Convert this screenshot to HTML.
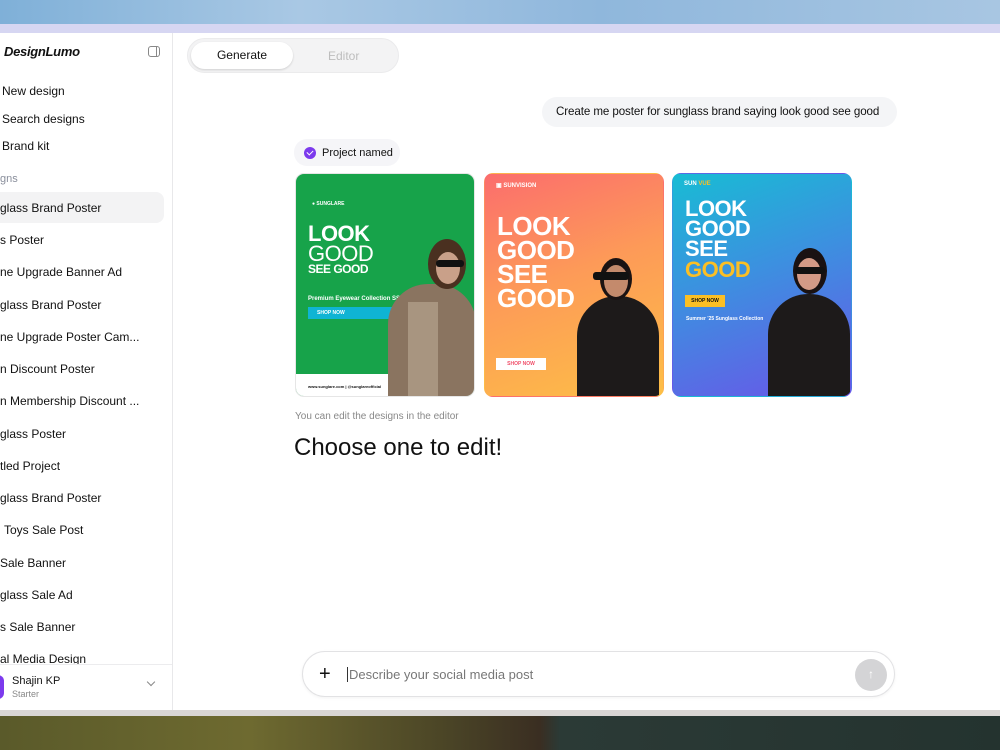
<!DOCTYPE html>
<html><head><meta charset="utf-8"><style>
*{box-sizing:border-box;margin:0;padding:0}
body{width:1000px;height:750px;overflow:hidden;position:relative;font-family:"Liberation Sans",sans-serif;color:#111;background:#fff}
.sky{position:absolute;left:0;top:0;width:1000px;height:26px;background:linear-gradient(90deg,#7fb0d8,#a9c8e4 30%,#8fb7dc 60%,#a8c6e2)}
.lav{position:absolute;left:0;top:24px;width:1000px;height:9px;background:#d6d6f2}
.land{position:absolute;left:0;top:716px;width:1000px;height:34px;background:linear-gradient(90deg,#5a5a2a,#6e6a30 25%,#4a4426 45%,#3a2e22 54%,#2b3a36 56%,#24332f 100%)}
.gray{position:absolute;left:0;top:709px;width:1000px;height:8px;background:#d9d6d4}
.win{position:absolute;left:0;top:33px;width:1000px;height:677px;background:#fff}
.side{position:absolute;left:0;top:0;width:173px;height:677px;border-right:1px solid #e8e8ea;overflow:hidden}
.logo{position:absolute;left:4px;top:11px;font-weight:bold;font-style:italic;font-size:13px;letter-spacing:-.3px}
.tog{position:absolute;left:148px;top:13px;width:12px;height:11px;border:1.3px solid #888;border-radius:3px}
.tog:after{content:"";position:absolute;right:2px;top:0;width:1.3px;height:9px;background:#888}
.it{position:absolute;left:2px;font-size:12px;white-space:nowrap}
.sec{position:absolute;left:0;top:140px;font-size:11px;color:#8a8f9c}
.sel{position:absolute;left:-10px;top:159px;width:174px;height:31px;background:#f3f3f4;border-radius:8px}
.user{position:absolute;left:0;top:631px;width:173px;height:46px;border-top:1px solid #ececee;background:#fff}
.main{position:absolute;left:174px;top:0;right:0;height:677px}
.seg{position:absolute;left:13px;top:5px;width:212px;height:35px;background:#f3f3f4;border-radius:18px;border:1px solid #ebebec}
.seg .a{position:absolute;left:3px;top:3px;width:102px;height:27px;background:#fff;border-radius:14px;box-shadow:0 1px 2px rgba(0,0,0,.15);font-size:12px;text-align:center;line-height:27px;font-weight:500}
.seg .b{position:absolute;left:140px;top:10px;font-size:12px;color:#bdbdbd}
.bub{position:absolute;left:368px;top:64px;height:30px;padding:0 18px 0 14px;background:#f4f5f7;border-radius:15px;font-size:11.6px;line-height:30px;letter-spacing:-.1px}
.chip{position:absolute;left:120px;top:106px;width:106px;height:27px;background:#f5f5f8;border-radius:13px;font-size:11px;line-height:28px;padding-left:28px}
.chip i{position:absolute;left:10px;top:8px;width:12px;height:12px;border-radius:50%;background:#7c3aed}
.chip i:after{content:"";position:absolute;left:3px;top:2.5px;width:5px;height:3px;border-left:1.5px solid #fff;border-bottom:1.5px solid #fff;transform:rotate(-45deg)}
.card{position:absolute;top:140px;width:180px;height:224px;border-radius:9px;overflow:hidden;border:1px solid #e6e6e6}
.h{position:absolute;color:#fff;font-weight:bold;line-height:.92;letter-spacing:-.5px}
.fig{position:absolute;background:#1d1a1a;border-radius:40px 40px 0 0}
.head{position:absolute;border-radius:50%}
.cap{position:absolute;left:121px;top:378px;font-size:10px;color:#888}
.choose{position:absolute;left:120px;top:401px;font-size:24px;color:#111}
.inp{position:absolute;left:128px;top:618px;width:593px;height:46px;border:1px solid #e2e2e4;border-radius:23px;background:#fff;box-shadow:0 1px 3px rgba(0,0,0,.05)}
.inp .p{position:absolute;left:16px;top:11px;font-size:20px;font-weight:300}
.inp .t{position:absolute;left:44px;top:15px;font-size:13px;color:#777;border-left:1px solid #333;padding-left:1px}
.inp .s{position:absolute;right:7px;top:7px;width:32px;height:32px;border-radius:50%;background:#d4d4d6;color:#fff;text-align:center;line-height:31px;font-size:12px}
</style></head><body>
<div class="sky"></div><div class="lav"></div><div class="gray"></div><div class="land"></div>
<div class="win">
 <div class="side">
  <div class="logo">DesignLumo</div><div class="tog"></div>
  <div class="it" style="top:51px">New design</div>
  <div class="it" style="top:79px">Search designs</div>
  <div class="it" style="top:106px">Brand kit</div>
  <div class="sec">gns</div>
  <div class="sel"></div>
  <div class="it" style="top:168px;left:0">glass Brand Poster</div>
  <div class="it" style="top:200px;left:0">s Poster</div>
  <div class="it" style="top:232px;left:0">ne Upgrade Banner Ad</div>
  <div class="it" style="top:265px;left:0">glass Brand Poster</div>
  <div class="it" style="top:297px;left:0">ne Upgrade Poster Cam...</div>
  <div class="it" style="top:329px;left:0">n Discount Poster</div>
  <div class="it" style="top:361px;left:0">n Membership Discount ...</div>
  <div class="it" style="top:394px;left:0">glass Poster</div>
  <div class="it" style="top:426px;left:0">tled Project</div>
  <div class="it" style="top:458px;left:0">glass Brand Poster</div>
  <div class="it" style="top:490px;left:4px">Toys Sale Post</div>
  <div class="it" style="top:523px;left:0">Sale Banner</div>
  <div class="it" style="top:555px;left:0">glass Sale Ad</div>
  <div class="it" style="top:587px;left:0">s Sale Banner</div>
  <div class="it" style="top:619px;left:0">al Media Design</div>
  <div class="user">
   <div style="position:absolute;left:-8px;top:10px;width:12px;height:24px;border-radius:6px;background:#7c3aed"></div>
   <div style="position:absolute;left:12px;top:10px;font-size:11px;font-weight:500">Shajin KP</div>
   <div style="position:absolute;left:12px;top:24px;font-size:9px;color:#888">Starter</div>
   <div style="position:absolute;left:148px;top:14px;width:6px;height:6px;border-right:1.2px solid #888;border-bottom:1.2px solid #888;transform:rotate(45deg)"></div>
  </div>
 </div>
 <div class="main">
  <div class="seg"><div class="a">Generate</div><div class="b">Editor</div></div>
  <div class="bub">Create me poster for sunglass brand saying look good see good</div>
  <div class="chip"><i></i>Project named</div>

  <div class="card" style="left:121px;background:#17a34a">
   <div style="position:absolute;left:0;bottom:0;width:100%;height:22px;background:#fff"></div>
   <div style="position:absolute;left:16px;top:27px;font-size:5px;color:#fff;font-weight:bold">● SUNGLARE</div>
   <div class="h" style="left:12px;top:50px;font-size:22px">LOOK<br><span style="font-weight:normal">GOOD</span></div>
   <div class="h" style="left:12px;top:90px;font-size:12px">SEE GOOD</div>
   <div style="position:absolute;left:12px;top:122px;font-size:6px;color:#fff;font-weight:bold">Premium Eyewear Collection SS</div>
   <div style="position:absolute;left:12px;top:133px;width:110px;height:12px;background:#0fb4d4;font-size:5px;color:#fff;font-weight:bold;padding:3px 0 0 9px">SHOP NOW</div>
   <div class="fig" style="left:92px;top:110px;width:88px;height:112px;background:#8a7460"></div>
   <div style="position:absolute;left:112px;top:128px;width:30px;height:94px;background:#a89580"></div>
   <div class="head" style="left:132px;top:65px;width:38px;height:50px;background:#4a3020"></div>
   <div class="head" style="left:140px;top:78px;width:24px;height:32px;background:#c9a089"></div>
   <div style="position:absolute;left:140px;top:86px;width:28px;height:7px;background:#111;border-radius:3px"></div>
   <div style="position:absolute;left:12px;top:210px;font-size:4px;color:#111;font-weight:bold">www.sunglare.com | @sunglareofficial</div>
  </div>

  <div class="card" style="left:310px;background:linear-gradient(160deg,#fb6d6d,#fd9a58 45%,#fdbf46);border-color:transparent">
   <div style="position:absolute;left:11px;top:8px;font-size:6px;color:#fff;font-weight:bold">▣ SUNVISION</div>
   <div class="h" style="left:12px;top:41px;font-size:26px">LOOK<br>GOOD<br>SEE<br>GOOD</div>
   <div style="position:absolute;left:11px;top:184px;width:50px;height:12px;background:#fff;font-size:5px;color:#f0506a;text-align:center;line-height:12px;font-weight:bold">SHOP NOW</div>
   <div class="fig" style="left:92px;top:122px;width:82px;height:102px"></div>
   <div class="head" style="left:115px;top:84px;width:32px;height:42px;background:#1a1212"></div>
   <div class="head" style="left:119px;top:91px;width:24px;height:32px;background:#c48a6c"></div>
   <div style="position:absolute;left:108px;top:98px;width:36px;height:8px;background:#111;border-radius:3px"></div>
  </div>

  <div class="card" style="left:498px;background:linear-gradient(160deg,#18bcd4,#3d8fe0 45%,#6a55e8);border-color:transparent">
   <div style="position:absolute;left:11px;top:7px;font-size:6px;color:#fff;font-weight:bold">SUN <span style="color:#fbbf24">VUE</span></div>
   <div class="h" style="left:12px;top:25px;font-size:22px">LOOK<br>GOOD<br>SEE<br><span style="color:#fbbf24">GOOD</span></div>
   <div style="position:absolute;left:12px;top:121px;width:40px;height:12px;background:#fbbf24;font-size:5px;color:#111;text-align:center;line-height:12px;font-weight:bold">SHOP NOW</div>
   <div style="position:absolute;left:13px;top:142px;font-size:5px;color:#fff;font-weight:bold">Summer '25 Sunglass Collection</div>
   <div class="fig" style="left:95px;top:120px;width:82px;height:104px"></div>
   <div class="head" style="left:120px;top:74px;width:34px;height:46px;background:#1a1212"></div>
   <div class="head" style="left:124px;top:84px;width:24px;height:32px;background:#d39a86"></div>
   <div style="position:absolute;left:122px;top:93px;width:30px;height:7px;background:#111;border-radius:3px"></div>
  </div>

  <div class="cap">You can edit the designs in the editor</div>
  <div class="choose">Choose one to edit!</div>
  <div class="inp"><div class="p">+</div><div class="t">Describe your social media post</div><div class="s">↑</div></div>
 </div>
</div>
</body></html>
